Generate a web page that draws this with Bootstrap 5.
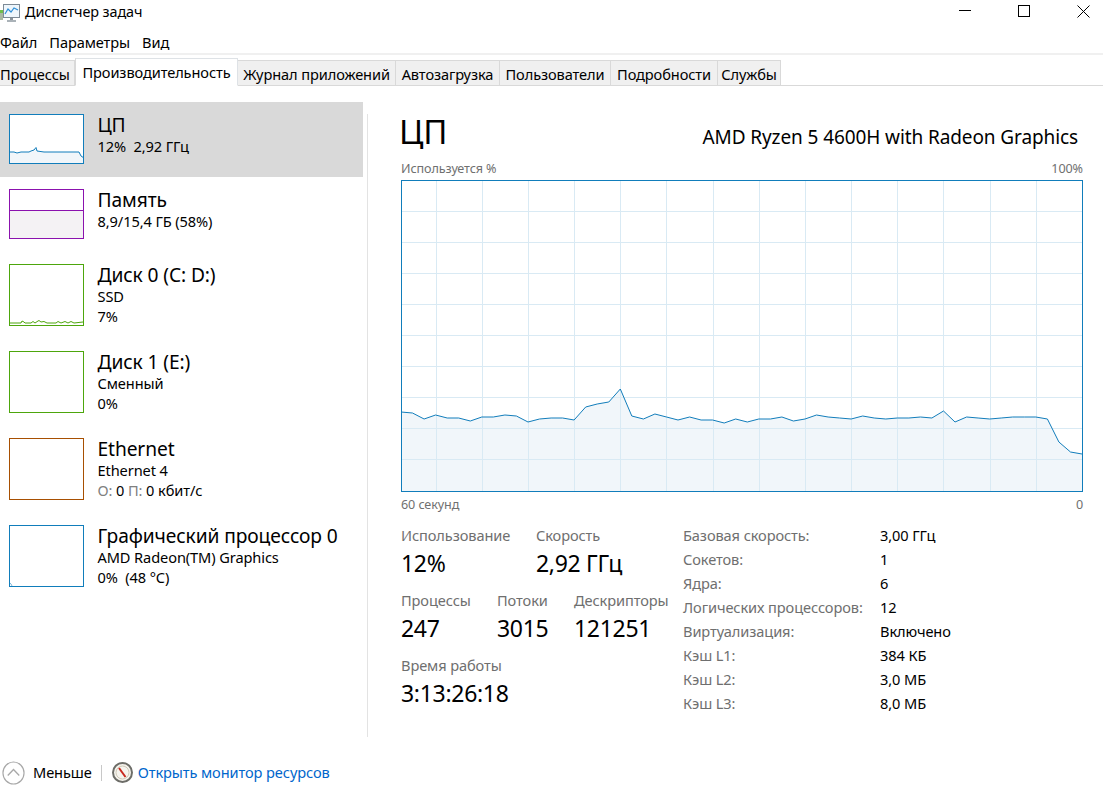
<!DOCTYPE html>
<html lang="ru">
<head>
    <meta charset="UTF-8">
    <meta name="viewport" content="width=device-width, initial-scale=1.0">
    <title>Диспетчер задач</title>
    <link rel="stylesheet" href="https://cdn.jsdelivr.net/npm/bootstrap@5.3.0/dist/css/bootstrap.min.css">
    <style>
        html, body { height: 100%; }
        body { font-family: "Noto Sans", "Open Sans", sans-serif; font-size: 14.6px; color: #000; background: #fff; overflow: hidden; letter-spacing: -0.1px; }
        .app-window { width: 1103px; height: 795px; }
        .title-bar { height: 27px; }
        .title-bar .app-name { margin-left: 5px; line-height: 24px; font-size: 14.4px; }
        .win-btn { width: 20px; height: 22px; display: flex; align-items: center; justify-content: center; }
        .win-btns { gap: 39px; padding-right: 10px; }
        .menu-bar { height: 28px; border-bottom: 2px solid #f0f0f0; line-height: 31px; }
        .menu-bar span { margin-right: 12px; }
        .task-tabs { height: 31px; padding-top: 3px; border-bottom: 1px solid #d9d9d9; flex-wrap: nowrap; }
        .task-tabs .nav-link { height: 26px; margin: 2px 0 -1px; padding: 0; border: 1px solid #d9d9d9; border-left: 0; border-radius: 0; background: #f0f0f0; color: #000; line-height: 26px; text-align: center; }
        .task-tabs .nav-link.active { height: 28px; margin-top: 0; border-left: 1px solid #d9d9d9; border-bottom-color: #fff; background: #fff; color: #000; line-height: 26px; }
        .tab-a { width: 75px; } .tab-b { width: 163px; } .tab-c { width: 158px; } .tab-d { width: 104px; }
        .tab-e { width: 111px; } .tab-f { width: 107px; } .tab-g { width: 63px; }
        .tab-a .nav-link { padding-right: 5px; }
        .side-panel { width: 363px; padding-top: 16px; }
        .perf-item { display: flex; padding: 12px 0 13px 9px; border: 0; border-radius: 0; background: transparent; color: #000; }
        .perf-item.active { background: #d9d9d9; color: #000; }
        .perf-item svg { display: block; flex: none; }
        .perf-text { margin-left: 12.5px; line-height: 20px; }
        .perf-name { font-size: 19.2px; line-height: 23px; margin-top: -1px; }
        .muted-key { color: #808080; }
        .v-rule { width: 1px; height: 623px; margin: 28px 0 0 4px; background: #e3e3e3; }
        .perf-main { width: 682px; margin-left: 33px; padding-top: 28px; }
        .perf-title { font-size: 33px; line-height: 36px; height: 38px; margin-left: -2px; }
        .cpu-model { font-size: 19px; margin-right: 5px; line-height: 26px; padding-top: 10px; }
        .chart-label { font-size: 12.6px; color: #707070; line-height: 16px; }
        .chart-top { margin-top: 9px; height: 19px; }
        .chart-box { display: block; }
        .chart-bottom { height: 28px; padding-top: 5px; }
        .stat-left { width: 282px; padding-top: 5px; }
        .stat-key { color: #6f6f6f; line-height: 20px; }
        .stat-val { font-size: 23px; line-height: 34px; margin-top: 1px; letter-spacing: -0.3px; }
        .stat-row { margin-bottom: 10px; }
        .spec-grid { display: grid; grid-template-columns: 197px auto; grid-auto-rows: 24px; line-height: 24px; padding-top: 3px; }
        .spec-grid .spec-key { color: #6f6f6f; }
        .foot-bar { height: 44px; margin-top: auto; padding: 0 0 1px 2px; }
        .foot-sep { width: 1px; height: 16px; margin: 0 10px 0 9px; background: #c8c8c8; }
        .foot-link { color: #0066cc; text-decoration: none; margin-left: 5px; }
    </style>
</head>
<body>
<div class="app-window d-flex flex-column">

    <!-- Title bar -->
    <div class="title-bar d-flex align-items-start">
        <svg width="20" height="20" viewBox="0 0 20 20" class="mt-1">
            <rect x="0" y="6" width="3" height="10" fill="#a9b8a0"/>
            <rect x="0" y="6" width="3" height="3" fill="#6fbf4a"/>
            <rect x="3.5" y="0.5" width="16" height="13" fill="#eef6fc" stroke="#7d8a96"/>
            <polyline points="5,10 8,5 11,8 14,4 18,6" fill="none" stroke="#2f8fd8" stroke-width="1.2"/>
            <rect x="10" y="14" width="3" height="2" fill="#8a949c"/>
            <rect x="7" y="16" width="9" height="2" fill="#aab2b8"/>
        </svg>
        <span class="app-name flex-grow-1">Диспетчер задач</span>
        <div class="win-btns d-flex">
            <div class="win-btn"><svg width="12" height="12"><line x1="0" y1="5.5" x2="12" y2="5.5" stroke="#000"/></svg></div>
            <div class="win-btn"><svg width="12" height="12"><rect x="0.5" y="0.5" width="11" height="11" fill="none" stroke="#000"/></svg></div>
            <div class="win-btn"><svg width="13" height="13"><path d="M0.5 0.5L12.5 12.5M12.5 0.5L0.5 12.5" stroke="#000" fill="none"/></svg></div>
        </div>
    </div>

    <!-- Menu -->
    <div class="menu-bar"><span>Файл</span><span>Параметры</span><span>Вид</span></div>

    <!-- Tabs -->
    <ul class="nav nav-tabs task-tabs">
        <li class="nav-item tab-a"><a class="nav-link" href="#">Процессы</a></li>
        <li class="nav-item tab-b"><a class="nav-link active" href="#">Производительность</a></li>
        <li class="nav-item tab-c"><a class="nav-link" href="#">Журнал приложений</a></li>
        <li class="nav-item tab-d"><a class="nav-link" href="#">Автозагрузка</a></li>
        <li class="nav-item tab-e"><a class="nav-link" href="#">Пользователи</a></li>
        <li class="nav-item tab-f"><a class="nav-link" href="#">Подробности</a></li>
        <li class="nav-item tab-g"><a class="nav-link" href="#">Службы</a></li>
    </ul>

    <div class="d-flex flex-grow-1">
        <!-- Sidebar -->
        <div class="side-panel">
            <div class="list-group list-group-flush">
                <div class="list-group-item perf-item active">
                    <svg width="76" height="50">
                        <rect width="75" height="50" fill="#fff"/>
                        <polygon points="1,38 5,38 8,39 12,38 20,38 22,37 25,36 27,33.5 28,37 35,38 70,38 72,42 75,44 75,49 1,49" fill="#f1f6fa"/>
                        <polyline points="1,38 5,38 8,39 12,38 20,38 22,37 25,36 27,33.5 28,37 35,38 70,38 72,42 75,44" fill="none" stroke="#117dbb"/>
                        <rect x="0.5" y="0.5" width="74" height="49" fill="none" stroke="#117dbb"/>
                    </svg>
                    <div class="perf-text"><div class="perf-name">ЦП</div><div>12%&nbsp; 2,92 ГГц</div></div>
                </div>
                <div class="list-group-item perf-item">
                    <svg width="76" height="50">
                        <rect x="0.5" y="21" width="74" height="28" fill="#f4f2f4"/>
                        <line x1="0" y1="21.5" x2="75" y2="21.5" stroke="#8b12ae"/>
                        <rect x="0.5" y="0.5" width="74" height="49" fill="none" stroke="#8b12ae"/>
                    </svg>
                    <div class="perf-text"><div class="perf-name">Память</div><div>8,9/15,4 ГБ (58%)</div></div>
                </div>
                <div class="list-group-item perf-item">
                    <svg width="76" height="62">
                        <polyline points="1,59 12,59 13,57 15,58 16,59 22,59 24,57.5 26,59 29,57 30,56.5 32,58 35,57.5 38,59 47,59 49,57.5 52,59 56,57.5 59,59 62,57.5 65,59 74,58" fill="none" stroke="#4da60c"/>
                        <rect x="0.5" y="0.5" width="74" height="61" fill="none" stroke="#4da60c"/>
                    </svg>
                    <div class="perf-text"><div class="perf-name">Диск 0 (C: D:)</div><div>SSD</div><div>7%</div></div>
                </div>
                <div class="list-group-item perf-item">
                    <svg width="76" height="62"><rect x="0.5" y="0.5" width="74" height="61" fill="none" stroke="#4da60c"/></svg>
                    <div class="perf-text"><div class="perf-name">Диск 1 (E:)</div><div>Сменный</div><div>0%</div></div>
                </div>
                <div class="list-group-item perf-item">
                    <svg width="76" height="62"><rect x="0.5" y="0.5" width="74" height="61" fill="none" stroke="#a74f01"/></svg>
                    <div class="perf-text"><div class="perf-name">Ethernet</div><div>Ethernet 4</div><div><span class="muted-key">О:</span> 0 <span class="muted-key">П:</span> 0 кбит/с</div></div>
                </div>
                <div class="list-group-item perf-item">
                    <svg width="76" height="62">
                        <polyline points="1,58 2,59 3,61" fill="none" stroke="#7fb8dc"/>
                        <rect x="0.5" y="0.5" width="74" height="61" fill="none" stroke="#117dbb"/>
                    </svg>
                    <div class="perf-text"><div class="perf-name">Графический процессор 0</div><div>AMD Radeon(TM) Graphics</div><div>0%&nbsp; (48 °C)</div></div>
                </div>
            </div>
        </div>

        <div class="v-rule"></div>

        <!-- CPU details -->
        <div class="perf-main">
            <div class="d-flex justify-content-between">
                <div class="perf-title">ЦП</div>
                <div class="cpu-model">AMD Ryzen 5 4600H with Radeon Graphics</div>
            </div>
            <div class="chart-top chart-label d-flex justify-content-between"><span>Используется %</span><span>100%</span></div>
            <svg id="cpuChart" class="chart-box" width="682" height="312"></svg>
            <div class="chart-bottom chart-label d-flex justify-content-between"><span>60 секунд</span><span>0</span></div>

            <div class="d-flex">
                <div class="stat-left">
                    <div class="d-flex stat-row">
                        <div style="width:135px"><div class="stat-key">Использование</div><div class="stat-val">12%</div></div>
                        <div><div class="stat-key">Скорость</div><div class="stat-val">2,92 ГГц</div></div>
                    </div>
                    <div class="d-flex stat-row">
                        <div style="width:96px"><div class="stat-key">Процессы</div><div class="stat-val">247</div></div>
                        <div style="width:77px"><div class="stat-key">Потоки</div><div class="stat-val">3015</div></div>
                        <div><div class="stat-key">Дескрипторы</div><div class="stat-val">121251</div></div>
                    </div>
                    <div><div class="stat-key">Время работы</div><div class="stat-val">3:13:26:18</div></div>
                </div>
                <div class="spec-grid" id="specGrid"></div>
            </div>
        </div>
    </div>

    <!-- Footer -->
    <div class="foot-bar d-flex align-items-center">
        <svg width="23" height="24" viewBox="0 0 24 24" preserveAspectRatio="none">
            <circle cx="12" cy="12" r="11" fill="#fff" stroke="#a8a8a8" stroke-width="1.2"/>
            <polyline points="6,14.5 12,8.5 18,14.5" fill="none" stroke="#a8a8a8" stroke-width="1.4"/>
        </svg>
        <span class="ms-2">Меньше</span>
        <div class="foot-sep"></div>
        <svg width="21" height="21" viewBox="0 0 21 21">
            <circle cx="10.5" cy="10.5" r="9.5" fill="#f6f4ee" stroke="#6d6d68" stroke-width="2"/>
            <circle cx="10.5" cy="10.5" r="6.5" fill="none" stroke="#cfc9b8"/>
            <line x1="7" y1="6" x2="13.5" y2="15" stroke="#c8281e" stroke-width="2"/>
        </svg>
        <a class="foot-link" href="#">Открыть монитор ресурсов</a>
    </div>
</div>

<script>
    document.addEventListener("DOMContentLoaded", function() {
        // sampled from the history graph, x every 11.55px
        const usage = [232,233,239,235,238,238,241,237,237,235,236,242,239,238,238,240,227,224,222,209,236,239,234,237,240,237,240,240,243,239,242,
            239,239,237,241,239,235,237,238,239,236,238,239,238,238,237,238,231,242,237,238,239,238,237,237,237,239,262,272,274];
        const w = 682, h = 311;
        let svg = "";

        for (let i = 1; i < 10; i++) {
            const y = i * 31 + 0.5;
            svg += `<line x1="0" x2="${w}" y1="${y}" y2="${y}" stroke="#d9eaf4"/>`;
        }
        [35,81,127,173,219,265,312,358,404,450,496,542,589,635].forEach(function(x) {
            svg += `<line x1="${x + 0.5}" x2="${x + 0.5}" y1="0" y2="${h}" stroke="#d9eaf4"/>`;
        });

        const step = (w - 1) / (usage.length - 1);
        const pts = usage.map((v, i) => `${(i * step).toFixed(1)},${v}`).join(" ");
        svg = `<polygon points="0,${h} ${pts} ${w},${h}" fill="#f1f6fa"/>` + svg;
        svg += `<polyline points="${pts}" fill="none" stroke="#117dbb"/>`;
        svg += `<rect x="0.5" y="0.5" width="${w - 1}" height="${h}" fill="none" stroke="#117dbb"/>`;
        document.getElementById("cpuChart").innerHTML = svg;

        const specs = [
            ["Базовая скорость:", "3,00 ГГц"], ["Сокетов:", "1"], ["Ядра:", "6"],
            ["Логических процессоров:", "12"], ["Виртуализация:", "Включено"],
            ["Кэш L1:", "384 КБ"], ["Кэш L2:", "3,0 МБ"], ["Кэш L3:", "8,0 МБ"]
        ];
        document.getElementById("specGrid").innerHTML = specs.map(s =>
            `<div class="spec-key">${s[0]}</div><div>${s[1]}</div>`).join("");
    });
</script>
<script src="https://cdn.jsdelivr.net/npm/bootstrap@5.3.0/dist/js/bootstrap.bundle.min.js"></script>
</body>
</html>
